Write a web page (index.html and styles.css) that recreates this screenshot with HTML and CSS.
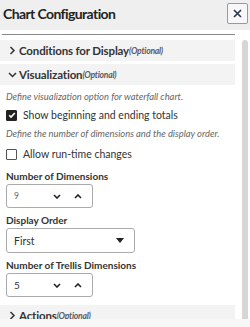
FILE: index.html
```html
<!DOCTYPE html>
<html lang="en">
<head>
    <meta charset="UTF-8">
    <title>Chart Configuration</title>
    <link rel="stylesheet" href="styles.css">
</head>
<body>
    <div class="dialog">
        <header class="dialog-header">
            <h1>Chart Configuration</h1>
            <button class="close-button" aria-label="Close">
                <svg width="9" height="9" viewBox="0 0 9 9"><path d="M1 1l7 7M8 1l-7 7" stroke="#27344f" stroke-width="1.6"/></svg>
            </button>
        </header>
        <div class="divider"></div>
        <div class="dialog-body">
            <div class="content">
                <div class="section-row">
                    <svg class="chevron" width="6" height="9" viewBox="0 0 6 9"><path d="M1 1l3.5 3.5L1 8" fill="none" stroke="#333" stroke-width="1.5"/></svg>
                    <span class="section-title">Conditions for Display</span><span class="optional">(Optional)</span>
                </div>
                <div class="section-row">
                    <svg class="chevron" width="9" height="6" viewBox="0 0 9 6"><path d="M1 1l3.5 3.5L8 1" fill="none" stroke="#333" stroke-width="1.5"/></svg>
                    <span class="section-title">Visualization</span><span class="optional">(Optional)</span>
                </div>
                <div class="section-content">
                    <p class="hint">Define visualization option for waterfall chart.</p>
                    <label class="check-row">
                        <span class="checkbox checked">
                            <svg width="8" height="8" viewBox="0 0 8 8"><path d="M1.2 4.2l1.8 1.8 3.8-4" fill="none" stroke="#fff" stroke-width="1.6"/></svg>
                        </span>
                        Show beginning and ending totals
                    </label>
                    <p class="hint hint-tall">Define the number of dimensions and the display order.</p>
                    <label class="check-row check-tall">
                        <span class="checkbox"></span>
                        Allow run-time changes
                    </label>

                    <div class="field">
                        <div class="field-label">Number of Dimensions</div>
                        <div class="spinner">
                            <span class="spin-value faint">9</span>
                            <svg class="spin-icon" width="8" height="5" viewBox="0 0 8 5"><path d="M1 1l3 3 3-3" fill="none" stroke="#222" stroke-width="1.6"/></svg>
                            <svg class="spin-icon" width="8" height="5" viewBox="0 0 8 5"><path d="M1 4l3-3 3 3" fill="none" stroke="#222" stroke-width="1.6"/></svg>
                        </div>
                    </div>

                    <div class="field">
                        <div class="field-label">Display Order</div>
                        <div class="select">
                            <span>First</span>
                            <svg width="8" height="5" viewBox="0 0 8 5"><path d="M0 0h8L4 5z" fill="#222"/></svg>
                        </div>
                    </div>

                    <div class="field">
                        <div class="field-label">Number of Trellis Dimensions</div>
                        <div class="spinner">
                            <span class="spin-value">5</span>
                            <svg class="spin-icon" width="8" height="5" viewBox="0 0 8 5"><path d="M1 1l3 3 3-3" fill="none" stroke="#222" stroke-width="1.6"/></svg>
                            <svg class="spin-icon" width="8" height="5" viewBox="0 0 8 5"><path d="M1 4l3-3 3 3" fill="none" stroke="#222" stroke-width="1.6"/></svg>
                        </div>
                    </div>
                </div>
                <div class="section-row">
                    <svg class="chevron" width="6" height="9" viewBox="0 0 6 9"><path d="M1 1l3.5 3.5L1 8" fill="none" stroke="#333" stroke-width="1.5"/></svg>
                    <span class="section-title">Actions</span><span class="optional">(Optional)</span>
                </div>
            </div>
            <div class="scrollbar"></div>
        </div>
        <div class="dialog-footer"></div>
    </div>
</body>
</html>
```

FILE: styles.css
```css
/* Estilos generales */
body {
    margin: 0;
    font-family: Lato, "Open Sans", sans-serif;
    color: #333;
    background-color: #fff;
}

.dialog {
    width: 250px;
    height: 327px;
    display: flex;
    flex-direction: column;
    overflow: hidden;
}

.dialog-header {
    height: 30px;
    flex-shrink: 0;
    display: flex;
    justify-content: space-between;
    align-items: center;
    padding: 0 2px 0 3px;
    background-color: #efefef;
}

.dialog-header h1 {
    margin: 0 0 3px 0;
    font-size: 14px;
    font-weight: 700;
    letter-spacing: -0.6px;
    color: #222;
}

.close-button {
    width: 21px;
    height: 21px;
    padding: 0;
    border: 1px solid #999;
    border-radius: 2px;
    background-color: #f7f7f7;
    display: flex;
    align-items: center;
    justify-content: center;
    margin-bottom: 4px;
}

.divider {
    height: 1px;
    flex-shrink: 0;
    margin: 4px 15px 3px 2px;
    background-color: #888;
}

.dialog-body {
    flex: 1;
    display: flex;
    min-height: 0;
    padding-top: 2px;
}

.content {
    width: 235px;
    overflow: hidden;
}

.scrollbar {
    width: 6px;
    margin-left: 7px;
    height: 285px;
    border-radius: 3px 3px 0 0;
    background-color: #d6d6d6;
}

.section-row {
    display: flex;
    align-items: center;
    height: 21px;
    padding-left: 8px;
    margin-bottom: 3px;
    background-color: #f3f3f3;
}

.chevron {
    width: 9px;
    margin-right: 2px;
}

.section-title {
    font-size: 11.5px;
    font-weight: 700;
    letter-spacing: -0.15px;
    color: #333;
}

.optional {
    font-size: 8.6px;
    font-style: italic;
    font-weight: 700;
    letter-spacing: -0.25px;
    color: #5a5a66;
}

.section-content {
    padding: 0 6px 8px 6px;
}

.hint {
    margin: 0;
    font-size: 9.4px;
    font-style: italic;
    color: #666;
    line-height: 18px;
}

.hint-tall {
    line-height: 20px;
}

.check-row {
    display: flex;
    align-items: center;
    gap: 6px;
    height: 18px;
    font-size: 10.5px;
    color: #333;
}

.check-tall {
    height: 20px;
}

.checkbox {
    width: 9px;
    height: 9px;
    border: 1px solid #555;
    border-radius: 1px;
    display: flex;
    align-items: center;
    justify-content: center;
}

.checkbox.checked {
    background-color: #222;
    border-color: #222;
}

.field {
    margin-top: 6px;
}

.field-label {
    font-size: 10px;
    font-weight: 700;
    color: #333;
    line-height: 13px;
    margin-bottom: 1px;
}

.spinner {
    width: 87px;
    height: 24px;
    box-sizing: border-box;
    border: 1px solid #aaa;
    border-radius: 3px;
    display: flex;
    align-items: center;
    padding: 0 10px 0 7px;
    font-size: 10px;
}

.spin-value {
    flex: 1;
}

.spin-value.faint {
    font-size: 8.5px;
    color: #666;
}

.spin-icon + .spin-icon {
    margin-left: 13px;
}

.select {
    width: 129px;
    height: 25px;
    box-sizing: border-box;
    border: 1px solid #aaa;
    border-radius: 3px;
    display: flex;
    align-items: center;
    justify-content: space-between;
    padding: 0 10px 0 7px;
    font-size: 10.5px;
}

.dialog-footer {
    height: 8px;
    flex-shrink: 0;
    background-color: #f7f7f7;
}
```
